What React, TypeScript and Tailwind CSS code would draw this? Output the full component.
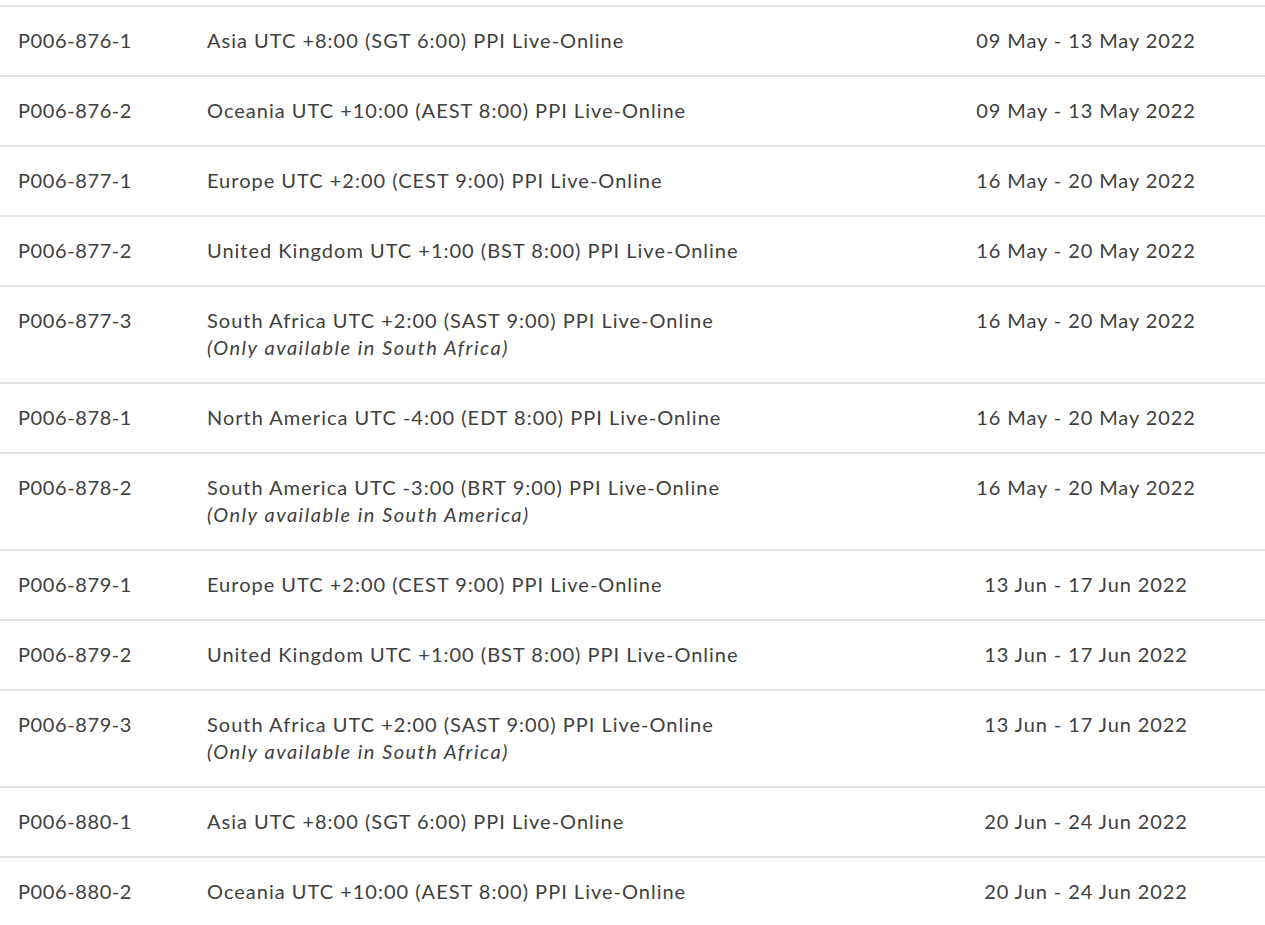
import React from "react";

type Row = { code: string; name: string; note?: string; date: string };

const rows: Row[] = [
  { code: "P006-876-1", name: "Asia UTC +8:00 (SGT 6:00) PPI Live-Online", date: "09 May - 13 May 2022" },
  { code: "P006-876-2", name: "Oceania UTC +10:00 (AEST 8:00) PPI Live-Online", date: "09 May - 13 May 2022" },
  { code: "P006-877-1", name: "Europe UTC +2:00 (CEST 9:00) PPI Live-Online", date: "16 May - 20 May 2022" },
  { code: "P006-877-2", name: "United Kingdom UTC +1:00 (BST 8:00) PPI Live-Online", date: "16 May - 20 May 2022" },
  { code: "P006-877-3", name: "South Africa UTC +2:00 (SAST 9:00) PPI Live-Online", note: "(Only available in South Africa)", date: "16 May - 20 May 2022" },
  { code: "P006-878-1", name: "North America UTC -4:00 (EDT 8:00) PPI Live-Online", date: "16 May - 20 May 2022" },
  { code: "P006-878-2", name: "South America UTC -3:00 (BRT 9:00) PPI Live-Online", note: "(Only available in South America)", date: "16 May - 20 May 2022" },
  { code: "P006-879-1", name: "Europe UTC +2:00 (CEST 9:00) PPI Live-Online", date: "13 Jun - 17 Jun 2022" },
  { code: "P006-879-2", name: "United Kingdom UTC +1:00 (BST 8:00) PPI Live-Online", date: "13 Jun - 17 Jun 2022" },
  { code: "P006-879-3", name: "South Africa UTC +2:00 (SAST 9:00) PPI Live-Online", note: "(Only available in South Africa)", date: "13 Jun - 17 Jun 2022" },
  { code: "P006-880-1", name: "Asia UTC +8:00 (SGT 6:00) PPI Live-Online", date: "20 Jun - 24 Jun 2022" },
  { code: "P006-880-2", name: "Oceania UTC +10:00 (AEST 8:00) PPI Live-Online", date: "20 Jun - 24 Jun 2022" },
];

export default function App() {
  return (
    <div
      className="min-h-[925px] w-[1265px] bg-white pt-[5px] text-[20px] leading-[27px] tracking-[0.9px] text-[#404040]"
      style={{ fontFamily: "Lato, 'Noto Sans', sans-serif" }}
    >
      <div className="border-t-2 border-[#e3e3e3]">
        {rows.map((r) => (
          <div
            key={r.code}
            className="grid grid-cols-[207px_700px_1fr] border-b-2 border-[#e3e3e3] pt-[20px] pb-[21px]"
          >
            <div className="pl-[18px] tracking-[0.6px]">{r.code}</div>
            <div>
              <div className="tracking-[1px]">{r.name}</div>
              {r.note && <div className="italic tracking-[1.5px]">{r.note}</div>}
            </div>
            <div className="text-center">{r.date}</div>
          </div>
        ))}
      </div>
    </div>
  );
}
